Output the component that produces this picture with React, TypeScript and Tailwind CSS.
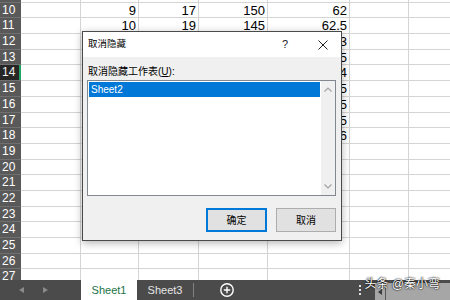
import React from 'react';

const COLS = [
  { key: 'a', w: 'w-[60px]' },
  { key: 'b', w: 'w-[58px]' },
  { key: 'c', w: 'w-[60px]' },
  { key: 'd', w: 'w-[69px]' },
  { key: 'e', w: 'w-[82px]' },
  { key: 'f', w: 'w-[59px]' },
  { key: 'g', w: 'w-[60px]' },
];

// visible values per row (columns B..E); rows 12-18 are mostly hidden behind the dialog
const DATA: Record<number, string[]> = {
  9: ['', '8', '15', '155', '62.5'],
  10: ['', '9', '17', '150', '62'],
  11: ['', '10', '19', '145', '62.5'],
  12: ['', '11', '21', '140', '60.3'],
  13: ['', '12', '23', '138', '61.5'],
  14: ['', '13', '25', '135', '63.4'],
  15: ['', '14', '27', '130', '65'],
  16: ['', '15', '29', '128', '64.5'],
  17: ['', '16', '31', '125', '58.5'],
  18: ['', '17', '33', '120', '60.6'],
};

const ROWS = Array.from({ length: 19 }, (_, i) => i + 9);

const Row: React.FC<{ n: number }> = ({ n }) => {
  const vals = DATA[n] || [];
  const active = n === 14;
  return (
    <div className="flex h-[15.7px] shrink-0">
      <div
        className={`w-[21px] shrink-0 pl-[2px] text-[12px] leading-[15px] border-b border-[#707070] ${
          active ? 'bg-[#262626] text-[#f2f2f2] shadow-[inset_-2px_0_0_#21a366]' : 'bg-[#595959] text-white'
        }`}
      >
        {n}
      </div>
      {COLS.map((c, i) => (
        <div
          key={c.key}
          className={`${c.w} shrink-0 border-r border-b border-[#d4d4d4] pr-[2px] text-right text-[13px] leading-[15px] text-black overflow-hidden whitespace-nowrap`}
        >
          {vals[i] || ''}
        </div>
      ))}
    </div>
  );
};

const UnhideDialog: React.FC = () => (
  <div className="absolute left-[82px] top-[31px] w-[260px] h-[210px] flex flex-col border border-[#4a4a4a] bg-[#f0f0f0] shadow-[0_2px_8px_rgba(0,0,0,0.3)]">
    <div className="h-[25px] shrink-0 flex items-center bg-white pl-[5px]">
      <span className="text-[9.5px] text-black">取消隐藏</span>
      <div className="ml-auto flex h-full gap-[2px]">
        <div className="w-[36px] flex items-center justify-center text-[11px] text-[#222]">?</div>
        <div className="w-[36px] flex items-center justify-center">
          <svg width="10" height="10" viewBox="0 0 10 10">
            <path d="M0.5 0.5 L9.5 9.5 M9.5 0.5 L0.5 9.5" stroke="#222" strokeWidth="1" fill="none" />
          </svg>
        </div>
      </div>
    </div>
    <div className="flex-1 flex flex-col px-[4px] pt-[8px]">
      <div className="pl-[1px] text-[10px] leading-[14px] text-black">
        取消隐藏工作表(<span className="underline">U</span>):
      </div>
      <div className="mt-[1px] w-[249px] h-[116px] flex border border-[#828790] bg-white">
        <div className="flex-1 p-[1px]">
          <div className="h-[15px] bg-[#0078d7] pl-[2px] text-[10px] leading-[15px] text-white">Sheet2</div>
        </div>
        <div className="w-[14px] flex flex-col items-center justify-between py-[6px] bg-[#f0f0f0]">
          <svg width="8" height="5" viewBox="0 0 8 5">
            <path d="M0.5 4.5 L4 1 L7.5 4.5" stroke="#a3a3a3" strokeWidth="1.2" fill="none" />
          </svg>
          <svg width="8" height="5" viewBox="0 0 8 5">
            <path d="M0.5 0.5 L4 4 L7.5 0.5" stroke="#a3a3a3" strokeWidth="1.2" fill="none" />
          </svg>
        </div>
      </div>
      <div className="mt-[12px] flex justify-end gap-[9px] pr-[1px]">
        <div className="w-[61px] h-[24px] flex items-center justify-center border-2 border-[#0078d7] bg-[#e1e1e1] text-[10px] text-black">
          确定
        </div>
        <div className="w-[60px] h-[24px] flex items-center justify-center border border-[#adadad] bg-[#e1e1e1] text-[10px] text-black">
          取消
        </div>
      </div>
    </div>
  </div>
);

const TabBar: React.FC = () => (
  <div className="h-[20px] shrink-0 flex bg-[#4b4b4b]">
    <div className="w-[81px] shrink-0 flex items-center">
      <span className="ml-[19px] w-0 h-0 border-y-[3.5px] border-y-transparent border-r-[5px] border-r-[#8a8a8a]" />
      <span className="ml-[19px] w-0 h-0 border-y-[3.5px] border-y-transparent border-l-[5px] border-l-[#8a8a8a]" />
    </div>
    <div className="w-[56px] shrink-0 flex items-center justify-center bg-white text-[11px] text-[#217346]">Sheet1</div>
    <div className="w-[56px] shrink-0 flex items-center justify-center text-[11px] text-[#e6e6e6]">Sheet3</div>
    <div className="w-[1px] h-[14px] self-center bg-[#808080]" />
    <div className="ml-[26px] flex items-center">
      <svg width="14" height="14" viewBox="0 0 14 14">
        <circle cx="7" cy="7" r="6.2" stroke="#fff" strokeWidth="1.4" fill="none" />
        <path d="M7 3.8 V10.2 M3.8 7 H10.2" stroke="#fff" strokeWidth="1.4" />
      </svg>
    </div>
    <div className="ml-auto flex flex-col items-center justify-center gap-[2px] w-[6px]">
      <span className="w-[2px] h-[2px] bg-[#e0e0e0]" />
      <span className="w-[2px] h-[2px] bg-[#e0e0e0]" />
      <span className="w-[2px] h-[2px] bg-[#e0e0e0]" />
    </div>
    <div className="ml-[12px] w-[75px] h-[17px] self-end flex bg-[#a6a6a6]">
      <div className="w-[11px] flex items-center justify-center border-r border-[#5a5a5a]">
        <span className="w-0 h-0 border-y-[3px] border-y-transparent border-r-[4px] border-r-[#3a3a3a]" />
      </div>
    </div>
  </div>
);

export default function App() {
  return (
    <div className="relative w-[450px] h-[300px] overflow-hidden bg-white flex flex-col font-['Liberation_Sans','Noto_Sans_CJK_SC',sans-serif]">
      <div className="flex-1 overflow-hidden">
        <div className="mt-[-13px] flex flex-col">
          {ROWS.map((n) => (
            <Row key={n} n={n} />
          ))}
        </div>
      </div>
      <TabBar />
      <UnhideDialog />
      <div className="absolute right-[10px] bottom-[9px] text-[12px] leading-[14px] text-white [text-shadow:0_0_2px_#000,0_0_1px_#000]">
        头条 @秦小弯
      </div>
    </div>
  );
}
